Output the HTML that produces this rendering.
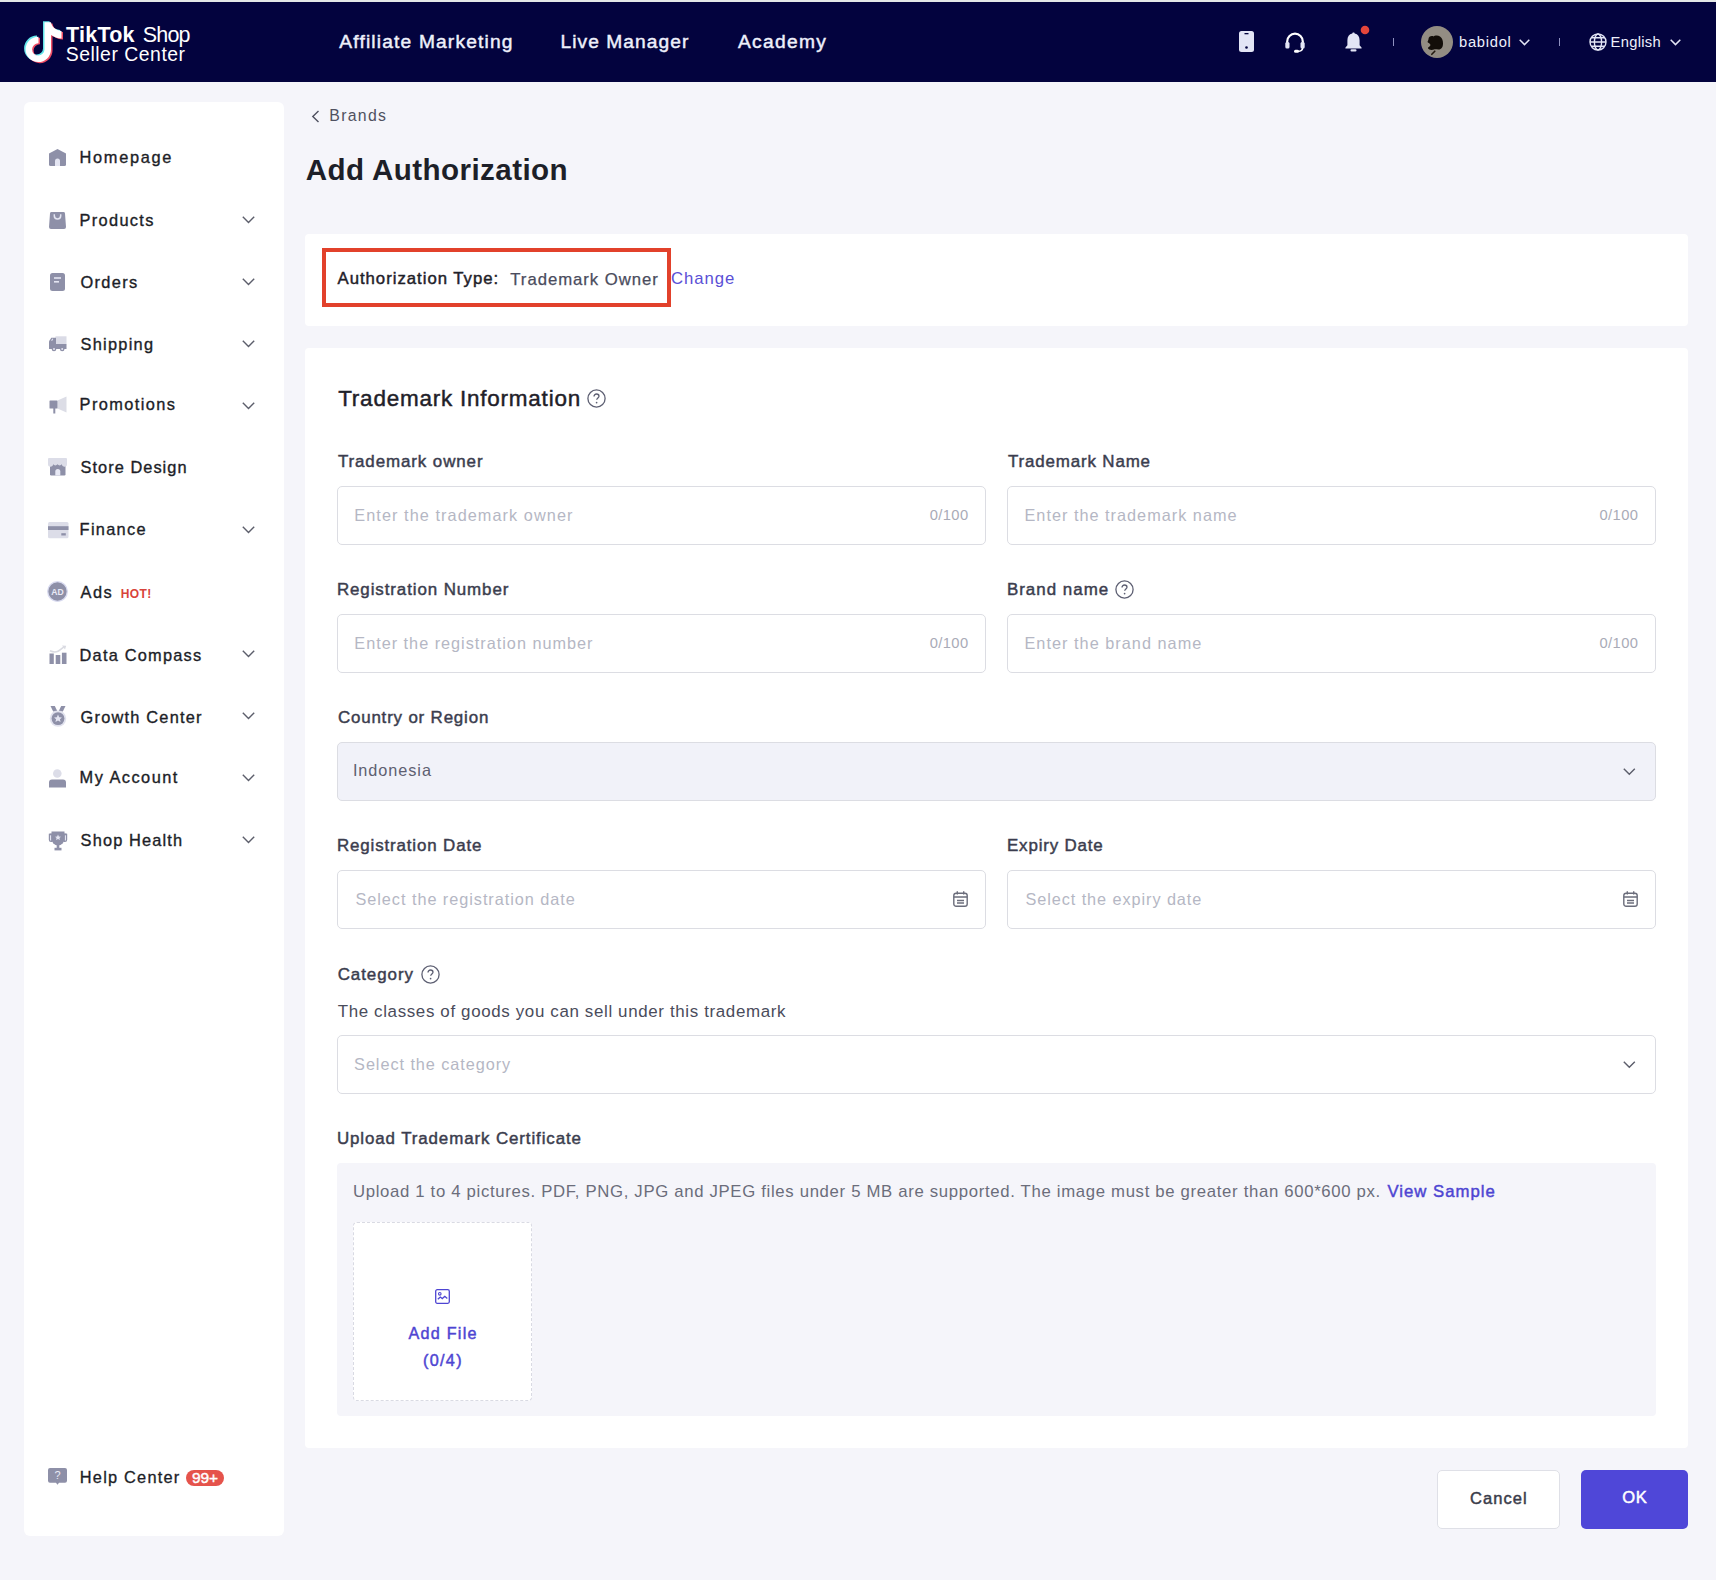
<!DOCTYPE html>
<html><head><meta charset="utf-8">
<style>
html,body{margin:0;padding:0;}
body{width:1716px;height:1580px;overflow:hidden;position:relative;background:#f5f5fa;font-family:"Liberation Sans",sans-serif;}
.t{position:absolute;white-space:nowrap;line-height:1;}
.abs{position:absolute;}
#topline{left:0;top:0;width:1716px;height:2px;background:#e3e7e6;}
#nav{left:0;top:2px;width:1716px;height:80px;background:#03033e;}
#side{left:24px;top:102px;width:260px;height:1434px;background:#fff;border-radius:6px;}
.card{background:#fff;border-radius:4px;}
.inp{position:absolute;box-sizing:border-box;border:1px solid #dcdde3;border-radius:5px;background:#fff;}
.sel{background:#f1f2f9;}
svg{position:absolute;overflow:visible;}
</style></head><body>
<div id="topline" class="abs"></div>
<div id="nav" class="abs"></div>

<!-- logo -->
<svg style="left:0;top:0" width="80" height="80" viewBox="0 0 80 80">
  <path d="M44.5 22.3 H51 C51.5 26.5 55.5 30.5 61.5 31 V38.5 C57.5 38.3 54 37 51 35 V49.5 A12.7 12.7 0 1 1 38.5 36.7 V43.2 A6.2 6.2 0 1 0 44.5 49.5 Z" fill="#64e6ea" transform="translate(-1.5,-1.1)"/>
  <path d="M44.5 22.3 H51 C51.5 26.5 55.5 30.5 61.5 31 V38.5 C57.5 38.3 54 37 51 35 V49.5 A12.7 12.7 0 1 1 38.5 36.7 V43.2 A6.2 6.2 0 1 0 44.5 49.5 Z" fill="#ef4d65" transform="translate(1.5,1.1)"/>
  <path d="M44.5 22.3 H51 C51.5 26.5 55.5 30.5 61.5 31 V38.5 C57.5 38.3 54 37 51 35 V49.5 A12.7 12.7 0 1 1 38.5 36.7 V43.2 A6.2 6.2 0 1 0 44.5 49.5 Z" fill="#ffffff"/>
</svg>

<!-- nav right icons -->
<svg style="left:1239px;top:31px" width="15" height="21" viewBox="0 0 15 21">
  <rect x="0" y="0" width="15" height="21" rx="2.5" fill="#e3e5f5"/>
  <rect x="5.5" y="2" width="4" height="1.3" fill="#03033e"/>
  <circle cx="7.5" cy="16.5" r="1.3" fill="#03033e"/>
</svg>
<svg style="left:1285px;top:32px" width="20" height="21" viewBox="0 0 20 21">
  <path d="M2.2 12 v-2.5 a7.8 7.8 0 0 1 15.6 0 v2.5" fill="none" stroke="#fff" stroke-width="2.2"/>
  <rect x="0.3" y="10" width="4.2" height="6.5" rx="1.5" fill="#e3e5f5"/>
  <rect x="15.5" y="10" width="4.2" height="6.5" rx="1.5" fill="#e3e5f5"/>
  <path d="M17.6 16 c0 2.2-2 3.3-5 3.4" fill="none" stroke="#fff" stroke-width="1.6"/>
  <rect x="9" y="17.8" width="5" height="3" rx="1.5" fill="#fff"/>
</svg>
<svg style="left:1345px;top:32px" width="17" height="20" viewBox="0 0 17 20">
  <path d="M8.5 0.5 c0.8 0 1.2 0.5 1.2 1.1 c3.2 0.7 4.9 3.3 4.9 6.6 v5 l1.9 2.2 c0.4 0.6 0.1 1.1-0.6 1.1 h-14.8 c-0.7 0-1-0.5-0.6-1.1 l1.9-2.2 v-5 c0-3.3 1.7-5.9 4.9-6.6 c0-0.6 0.4-1.1 1.2-1.1 z" fill="#e3e5f5"/>
  <rect x="5.5" y="17.2" width="6" height="2.3" rx="1.1" fill="#e3e5f5"/>
</svg>
<svg style="left:1360px;top:25px" width="10" height="10" viewBox="0 0 10 10"><circle cx="5" cy="5" r="4.3" fill="#e5463b"/></svg>
<div class="abs" style="left:1393px;top:38px;width:1px;height:8px;background:#8f91c0"></div>
<div class="abs" style="left:1421px;top:26px;width:32px;height:32px;border-radius:50%;background:#938d83;overflow:hidden">
  <svg style="left:0;top:0" width="32" height="32" viewBox="0 0 32 32">
    <path d="M7.5 13 C7.5 10.5 10.5 9.5 12.5 10.5 C13.5 9.5 17 9 19 10.5 C21.5 12 22 15 22 17.5 C22 21 20.5 23.5 17.5 23.5 C15.5 23.5 14 23 13 23.5 C11 24.5 7.5 24 6.8 22 C7.5 21 9 20.5 9.5 19 C9 17.5 7.5 17 6.5 16 C6.8 15 7.5 14 7.5 13 Z" fill="#130e09"/>
    <path d="M10.8 28.3 L13.8 25.2" stroke="#231a10" stroke-width="1.6" stroke-linecap="round"/>
  </svg>
</div>
<svg style="left:1519px;top:39px" width="11" height="7" viewBox="0 0 11 7"><path d="M0.7 0.7 L5.5 5.6 L10.3 0.7" fill="none" stroke="#e3e5f5" stroke-width="1.5"/></svg>
<div class="abs" style="left:1559px;top:38px;width:1px;height:8px;background:#8f91c0"></div>
<svg style="left:1589px;top:33px" width="18" height="18" viewBox="0 0 18 18">
  <g fill="none" stroke="#e3e5f5" stroke-width="1.4">
    <circle cx="9" cy="9" r="8"/>
    <ellipse cx="9" cy="9" rx="3.6" ry="8"/>
    <path d="M1 9 H17 M2.2 4.8 H15.8 M2.2 13.2 H15.8"/>
  </g>
</svg>
<svg style="left:1670px;top:39px" width="11" height="7" viewBox="0 0 11 7"><path d="M0.7 0.7 L5.5 5.6 L10.3 0.7" fill="none" stroke="#e3e5f5" stroke-width="1.5"/></svg>

<!-- sidebar -->
<div id="side" class="abs"></div>
<!-- home -->
<svg style="left:49px;top:149px" width="17" height="17" viewBox="0 0 17 17">
  <path d="M8.5 0 L17 4.6 V15.5 a1.5 1.5 0 0 1-1.5 1.5 H1.5 A1.5 1.5 0 0 1 0 15.5 V4.6 Z" fill="#8e90a8"/>
  <path d="M6 17 V12 a2.5 2.5 0 0 1 5 0 V17 Z" fill="#e4e5f2"/>
</svg>
<!-- products -->
<svg style="left:49px;top:212px" width="17" height="17" viewBox="0 0 17 17">
  <path d="M2.5 0 H14.5 a1.5 1.5 0 0 1 1.5 1.4 L17 15 a2 2 0 0 1-2 2 H2 a2 2 0 0 1-2-2 L1 1.4 A1.5 1.5 0 0 1 2.5 0 Z" fill="#8e90a8"/>
  <path d="M5.3 2.2 V3.8 a3.2 3.2 0 0 0 6.4 0 V2.2" fill="none" stroke="#e4e5f2" stroke-width="1.5"/>
</svg>
<!-- orders -->
<svg style="left:50px;top:273px" width="15" height="18" viewBox="0 0 15 18">
  <rect x="0" y="0" width="15" height="18" rx="2.5" fill="#8e90a8"/>
  <rect x="4" y="4.2" width="7" height="1.6" fill="#e4e5f2"/>
  <rect x="4" y="8" width="5" height="1.6" fill="#e4e5f2"/>
</svg>
<!-- shipping -->
<svg style="left:48.5px;top:335.5px" width="18" height="16" viewBox="0 0 18 16">
  <rect x="6.5" y="0.3" width="11" height="8" fill="#dadbe6"/>
  <path d="M2.3 1.8 H7 V13 H0 V5.3 Z" fill="#8e90a8"/>
  <rect x="6" y="8" width="11.5" height="5" fill="#8e90a8"/>
  <path d="M2.6 4.8 L3.8 2.8" stroke="#e4e5f2" stroke-width="1.1"/>
  <circle cx="5" cy="13" r="2.3" fill="#8e90a8"/><circle cx="5" cy="13" r="1" fill="#e4e5f2"/>
  <circle cx="13.2" cy="13" r="2.3" fill="#8e90a8"/><circle cx="13.2" cy="13" r="1" fill="#e4e5f2"/>
</svg>
<!-- promotions -->
<svg style="left:48.5px;top:395.5px" width="18" height="18" viewBox="0 0 18 18">
  <path d="M8.5 4.5 L17.5 0.5 V16.5 L8.5 12.5 Z" fill="#dcdde6"/>
  <rect x="0.5" y="4.5" width="8" height="8" rx="0.6" fill="#8e90a8"/>
  <rect x="4.3" y="12" width="2" height="5.5" fill="#8e90a8"/>
</svg>
<!-- store design -->
<svg style="left:48px;top:458px" width="19" height="18" viewBox="0 0 19 18">
  <rect x="2" y="6" width="15.5" height="11.5" rx="1.2" fill="#8e90a8"/>
  <path d="M1 0 H18 a1 1 0 0 1 1 1 V6 a2.6 2.6 0 0 1-5.2 0.3 a2.6 2.6 0 0 1-4.3 0 a2.6 2.6 0 0 1-4.3 0 A2.6 2.6 0 0 1 0 6 V1 A1 1 0 0 1 1 0 Z" fill="#dcdde8"/>
  <path d="M7.3 17.5 V13.5 a2.5 2.5 0 0 1 5 0 V17.5 Z" fill="#e8e9f5"/>
</svg>
<!-- finance -->
<svg style="left:47.5px;top:521.8px" width="20.5" height="16.5" viewBox="0 0 20.5 16.5">
  <rect x="0" y="0" width="20.5" height="16.3" rx="1.5" fill="#dcdde8"/>
  <rect x="0" y="4.2" width="20.5" height="3.8" fill="#8e90a8"/>
  <rect x="13.3" y="11.2" width="4.5" height="2.3" fill="#8e90a8"/>
</svg>
<!-- ads -->
<svg style="left:47px;top:581px" width="21" height="21" viewBox="0 0 21 21">
  <circle cx="10.5" cy="10.5" r="9.8" fill="#8e90a8" stroke="#d9dbf0" stroke-width="1.3"/>
  <text x="10.5" y="13.6" text-anchor="middle" font-family="Liberation Sans" font-weight="700" font-size="8.6" fill="#e9eaf6">AD</text>
</svg>
<!-- data compass -->
<svg style="left:48.5px;top:645px" width="18" height="19" viewBox="0 0 18 19">
  <path d="M1 5.8 C4 7.2 6.5 7.5 9 6.3 C11 5.3 13 3 15.5 1.6" fill="none" stroke="#dadbe2" stroke-width="1.6"/>
  <path d="M13 0.6 L17.2 0.8 L16 4.5 Z" fill="#dadbe2"/>
  <rect x="0.5" y="8.5" width="4.3" height="10.5" fill="#8e90a8"/>
  <rect x="6.7" y="10" width="4.6" height="9" fill="#8e90a8"/>
  <rect x="12.9" y="7.7" width="4.6" height="11.3" fill="#8e90a8"/>
</svg>
<!-- growth center -->
<svg style="left:48.5px;top:705px" width="18" height="23" viewBox="0 0 18 23">
  <path d="M1.5 1 H5.8 L8.5 6.5 H4.2 Z" fill="#8e90a8"/>
  <path d="M16.5 1 H12.2 L9.5 6.5 H13.8 Z" fill="#8e90a8"/>
  <circle cx="9" cy="13.6" r="8.2" fill="#e1e2ee"/>
  <circle cx="9" cy="13.6" r="6.4" fill="#8e90a8"/>
  <path d="M9 9.6 L10.2 12.3 L13 12.5 L10.9 14.3 L11.6 17.1 L9 15.6 L6.4 17.1 L7.1 14.3 L5 12.5 L7.8 12.3 Z" fill="#e4e5f2"/>
</svg>
<!-- my account -->
<svg style="left:49px;top:768.5px" width="17" height="19" viewBox="0 0 17 19">
  <circle cx="8.3" cy="4.5" r="4.3" fill="#dcdde8"/>
  <path d="M3 10.5 H14 a3 3 0 0 1 3 3 V18.5 H0 V13.5 A3 3 0 0 1 3 10.5 Z" fill="#8e90a8"/>
</svg>
<!-- shop health -->
<svg style="left:47.5px;top:830.5px" width="20" height="20" viewBox="0 0 20 20">
  <path d="M1.5 3 H4 M16 3 H18.5" stroke="#8e90a8" stroke-width="1"/>
  <path d="M0.8 2.8 H4.5 V11 H3 a2.2 2.2 0 0 1-2.2-2.2 Z" fill="#8e90a8"/>
  <path d="M19.2 2.8 H15.5 V11 H17 a2.2 2.2 0 0 0 2.2-2.2 Z" fill="#8e90a8"/>
  <rect x="2" y="4.3" width="1.2" height="5.2" fill="#e4e5f2"/>
  <rect x="16.8" y="4.3" width="1.2" height="5.2" fill="#e4e5f2"/>
  <path d="M3.5 0.5 H16.5 V8 a6.5 6.5 0 0 1-13 0 Z" fill="#8e90a8"/>
  <rect x="8.7" y="13.5" width="2.6" height="4" fill="#8e90a8"/>
  <rect x="6.5" y="16.8" width="7" height="2.6" fill="#8e90a8"/>
  <path d="M10 3.5 L10.9 5.6 L13 5.7 L11.4 7 L12 9.1 L10 7.9 L8 9.1 L8.6 7 L7 5.7 L9.1 5.6 Z" fill="#e4e5f2"/>
</svg>
<!-- help -->
<svg style="left:48px;top:1468px" width="19" height="17" viewBox="0 0 19 17">
  <path d="M2 0 H17 a2 2 0 0 1 2 2 V12.7 a2 2 0 0 1-2 2 H11 L9.5 16.7 L8 14.7 H2 a2 2 0 0 1-2-2 V2 A2 2 0 0 1 2 0 Z" fill="#8e90a8"/>
  <text x="9.5" y="11.4" text-anchor="middle" font-family="Liberation Sans" font-size="11" fill="#e9eaf6">?</text>
</svg>
<svg style="left:241.5px;top:216.4px" width="13" height="8" viewBox="0 0 13 8"><path d="M0.8 0.8 L6.5 6.5 L12.2 0.8" fill="none" stroke="#5c5e6b" stroke-width="1.4"/></svg>
<svg style="left:241.5px;top:278.3px" width="13" height="8" viewBox="0 0 13 8"><path d="M0.8 0.8 L6.5 6.5 L12.2 0.8" fill="none" stroke="#5c5e6b" stroke-width="1.4"/></svg>
<svg style="left:241.5px;top:340.3px" width="13" height="8" viewBox="0 0 13 8"><path d="M0.8 0.8 L6.5 6.5 L12.2 0.8" fill="none" stroke="#5c5e6b" stroke-width="1.4"/></svg>
<svg style="left:241.5px;top:402.2px" width="13" height="8" viewBox="0 0 13 8"><path d="M0.8 0.8 L6.5 6.5 L12.2 0.8" fill="none" stroke="#5c5e6b" stroke-width="1.4"/></svg>
<svg style="left:241.5px;top:526.1px" width="13" height="8" viewBox="0 0 13 8"><path d="M0.8 0.8 L6.5 6.5 L12.2 0.8" fill="none" stroke="#5c5e6b" stroke-width="1.4"/></svg>
<svg style="left:241.5px;top:650.0px" width="13" height="8" viewBox="0 0 13 8"><path d="M0.8 0.8 L6.5 6.5 L12.2 0.8" fill="none" stroke="#5c5e6b" stroke-width="1.4"/></svg>
<svg style="left:241.5px;top:712.0px" width="13" height="8" viewBox="0 0 13 8"><path d="M0.8 0.8 L6.5 6.5 L12.2 0.8" fill="none" stroke="#5c5e6b" stroke-width="1.4"/></svg>
<svg style="left:241.5px;top:773.9px" width="13" height="8" viewBox="0 0 13 8"><path d="M0.8 0.8 L6.5 6.5 L12.2 0.8" fill="none" stroke="#5c5e6b" stroke-width="1.4"/></svg>
<svg style="left:241.5px;top:835.9px" width="13" height="8" viewBox="0 0 13 8"><path d="M0.8 0.8 L6.5 6.5 L12.2 0.8" fill="none" stroke="#5c5e6b" stroke-width="1.4"/></svg>


<!-- breadcrumb chevron -->
<svg style="left:311px;top:110px" width="9" height="13" viewBox="0 0 9 13"><path d="M7.5 1 L1.8 6.5 L7.5 12" fill="none" stroke="#4f5160" stroke-width="1.4"/></svg>

<!-- card 1 -->
<div class="abs card" style="left:305px;top:234px;width:1383px;height:92px"></div>
<div class="abs" style="left:322px;top:248px;width:349px;height:58.5px;box-sizing:border-box;border:4px solid #e2412b"></div>

<!-- card 2 -->
<div class="abs card" style="left:305px;top:348px;width:1383px;height:1100px"></div>
<svg style="left:587px;top:389px" width="19" height="19" viewBox="0 0 19 19"><circle cx="9.5" cy="9.5" r="8.6" fill="none" stroke="#5d5f72" stroke-width="1.3"/><path d="M7 7.4 c0-1.5 1.1-2.4 2.5-2.4 c1.4 0 2.5 0.9 2.5 2.2 c0 1.6-2.3 1.9-2.3 3.6" fill="none" stroke="#5d5f72" stroke-width="1.3"/><circle cx="9.6" cy="13.6" r="0.85" fill="#5d5f72"/></svg>

<div class="inp" style="left:337px;top:486px;width:649px;height:59px"></div>
<div class="inp" style="left:1007px;top:486px;width:649px;height:59px"></div>
<div class="inp" style="left:337px;top:614px;width:649px;height:59px"></div>
<div class="inp" style="left:1007px;top:614px;width:649px;height:59px"></div>
<svg style="left:1115px;top:580px" width="19" height="19" viewBox="0 0 19 19"><circle cx="9.5" cy="9.5" r="8.6" fill="none" stroke="#5d5f72" stroke-width="1.3"/><path d="M7 7.4 c0-1.5 1.1-2.4 2.5-2.4 c1.4 0 2.5 0.9 2.5 2.2 c0 1.6-2.3 1.9-2.3 3.6" fill="none" stroke="#5d5f72" stroke-width="1.3"/><circle cx="9.6" cy="13.6" r="0.85" fill="#5d5f72"/></svg>

<div class="inp sel" style="left:337px;top:742px;width:1319px;height:59px"></div>
<svg style="left:1623px;top:768px" width="13" height="8" viewBox="0 0 13 8"><path d="M0.8 0.8 L6.3 6.3 L11.8 0.8" fill="none" stroke="#5c5e6b" stroke-width="1.4"/></svg>

<div class="inp" style="left:337px;top:870px;width:649px;height:59px"></div>
<div class="inp" style="left:1007px;top:870px;width:649px;height:59px"></div>
<svg style="left:953px;top:891px" width="15" height="16" viewBox="0 0 15 16"><g fill="none" stroke="#6b6d7b" stroke-width="1.4"><rect x="0.8" y="2.2" width="13.4" height="13" rx="2.3"/><path d="M0.8 6 H14.2 M4.3 0.3 V3.5 M10.7 0.3 V3.5 M4 9.5 H11 M4 12 H11"/></g></svg>
<svg style="left:1623px;top:891px" width="15" height="16" viewBox="0 0 15 16"><g fill="none" stroke="#6b6d7b" stroke-width="1.4"><rect x="0.8" y="2.2" width="13.4" height="13" rx="2.3"/><path d="M0.8 6 H14.2 M4.3 0.3 V3.5 M10.7 0.3 V3.5 M4 9.5 H11 M4 12 H11"/></g></svg>

<svg style="left:421px;top:965px" width="19" height="19" viewBox="0 0 19 19"><circle cx="9.5" cy="9.5" r="8.6" fill="none" stroke="#5d5f72" stroke-width="1.3"/><path d="M7 7.4 c0-1.5 1.1-2.4 2.5-2.4 c1.4 0 2.5 0.9 2.5 2.2 c0 1.6-2.3 1.9-2.3 3.6" fill="none" stroke="#5d5f72" stroke-width="1.3"/><circle cx="9.6" cy="13.6" r="0.85" fill="#5d5f72"/></svg>
<div class="inp" style="left:337px;top:1035px;width:1319px;height:59px"></div>
<svg style="left:1623px;top:1061px" width="13" height="8" viewBox="0 0 13 8"><path d="M0.8 0.8 L6.3 6.3 L11.8 0.8" fill="none" stroke="#5c5e6b" stroke-width="1.4"/></svg>

<div class="abs" style="left:337px;top:1163px;width:1319px;height:253px;background:#f5f5fa;border-radius:4px"></div>
<div class="abs" style="left:353px;top:1222px;width:179px;height:179px;box-sizing:border-box;border:1px dashed #d9dae3;background:#fff;border-radius:4px"></div>
<svg style="left:435px;top:1289px" width="15" height="15" viewBox="0 0 15 15"><g fill="none" stroke="#4e45d2" stroke-width="1.3"><rect x="0.7" y="0.7" width="13.6" height="13.6" rx="1.5"/><path d="M2.8 10.3 L5.3 8 L7.3 9.6 L9.8 7.3 L12.3 9.6"/></g><circle cx="4.8" cy="4.8" r="1.3" fill="none" stroke="#4e45d2" stroke-width="1.1"/></svg>

<!-- buttons -->
<div class="abs" style="left:1437px;top:1470px;width:123px;height:59px;box-sizing:border-box;border:1px solid #dfe0e7;background:#fff;border-radius:5px"></div>
<div class="abs" style="left:1581px;top:1470px;width:107px;height:59px;background:#4f47d8;border-radius:5px"></div>

<!-- badge -->
<div class="abs" style="left:186px;top:1470px;width:38px;height:16px;border-radius:8px;background:#e5534b"></div>

<div class=t style="left:66.10px;top:24.60px;font-size:21.5px;font-weight:700;color:#ffffff;letter-spacing:0.231px">TikTok</div>
<div class=t style="left:142.80px;top:24.60px;font-size:21.5px;font-weight:400;color:#ffffff;letter-spacing:-0.852px">Shop</div>
<div class=t style="left:65.70px;top:44.68px;font-size:19.4px;font-weight:400;color:#ffffff;letter-spacing:0.516px">Seller Center</div>
<div class=t style="left:339.30px;top:32.35px;font-size:19.2px;font-weight:400;color:#eef0fb;-webkit-text-stroke:0.45px #eef0fb;letter-spacing:1.168px">Affiliate Marketing</div>
<div class=t style="left:560.50px;top:32.35px;font-size:19.2px;font-weight:400;color:#eef0fb;-webkit-text-stroke:0.45px #eef0fb;letter-spacing:1.048px">Live Manager</div>
<div class=t style="left:737.90px;top:32.35px;font-size:19.2px;font-weight:400;color:#eef0fb;-webkit-text-stroke:0.45px #eef0fb;letter-spacing:1.335px">Academy</div>
<div class=t style="left:1459.00px;top:34.54px;font-size:14.72px;font-weight:400;color:#eef0fb;letter-spacing:0.733px">babidol</div>
<div class=t style="left:1610.50px;top:34.54px;font-size:14.72px;font-weight:400;color:#eef0fb;letter-spacing:0.319px">English</div>
<div class=t style="left:79.60px;top:149.24px;font-size:16.38px;font-weight:400;color:#1c1e27;-webkit-text-stroke:0.35px #1c1e27;letter-spacing:1.667px">Homepage</div>
<div class=t style="left:79.60px;top:212.04px;font-size:16.38px;font-weight:400;color:#1c1e27;-webkit-text-stroke:0.35px #1c1e27;letter-spacing:1.317px">Products</div>
<div class=t style="left:80.60px;top:273.84px;font-size:16.38px;font-weight:400;color:#1c1e27;-webkit-text-stroke:0.35px #1c1e27;letter-spacing:1.297px">Orders</div>
<div class=t style="left:80.60px;top:335.64px;font-size:16.38px;font-weight:400;color:#1c1e27;-webkit-text-stroke:0.35px #1c1e27;letter-spacing:1.247px">Shipping</div>
<div class=t style="left:79.60px;top:395.84px;font-size:16.38px;font-weight:400;color:#1c1e27;-webkit-text-stroke:0.35px #1c1e27;letter-spacing:1.393px">Promotions</div>
<div class=t style="left:80.60px;top:459.34px;font-size:16.38px;font-weight:400;color:#1c1e27;-webkit-text-stroke:0.35px #1c1e27;letter-spacing:1.030px">Store Design</div>
<div class=t style="left:79.60px;top:521.24px;font-size:16.38px;font-weight:400;color:#1c1e27;-webkit-text-stroke:0.35px #1c1e27;letter-spacing:1.300px">Finance</div>
<div class=t style="left:80.60px;top:583.74px;font-size:16.38px;font-weight:400;color:#1c1e27;-webkit-text-stroke:0.35px #1c1e27;letter-spacing:1.495px">Ads</div>
<div class=t style="left:79.60px;top:646.94px;font-size:16.38px;font-weight:400;color:#1c1e27;-webkit-text-stroke:0.35px #1c1e27;letter-spacing:1.207px">Data Compass</div>
<div class=t style="left:80.60px;top:708.94px;font-size:16.38px;font-weight:400;color:#1c1e27;-webkit-text-stroke:0.35px #1c1e27;letter-spacing:1.206px">Growth Center</div>
<div class=t style="left:79.60px;top:768.94px;font-size:16.38px;font-weight:400;color:#1c1e27;-webkit-text-stroke:0.35px #1c1e27;letter-spacing:1.465px">My Account</div>
<div class=t style="left:80.60px;top:831.64px;font-size:16.38px;font-weight:400;color:#1c1e27;-webkit-text-stroke:0.35px #1c1e27;letter-spacing:1.146px">Shop Health</div>
<div class=t style="left:120.80px;top:587.54px;font-size:12.0px;font-weight:700;color:#d8433b;letter-spacing:0.357px">HOT!</div>
<div class=t style="left:79.80px;top:1469.14px;font-size:16.38px;font-weight:400;color:#1c1e27;-webkit-text-stroke:0.3px #1c1e27;letter-spacing:1.216px">Help Center</div>
<div class=t style="left:192.10px;top:1469.88px;font-size:15.5px;font-weight:400;color:#ffffff;-webkit-text-stroke:0.45px #ffffff;letter-spacing:-0.170px">99+</div>
<div class=t style="left:329.30px;top:108.31px;font-size:15.82px;font-weight:400;color:#4f5160;letter-spacing:1.301px">Brands</div>
<div class=t style="left:305.70px;top:155.16px;font-size:29.59px;font-weight:700;color:#1d1f28;letter-spacing:0.423px">Add Authorization</div>
<div class=t style="left:337.50px;top:271.03px;font-size:16.74px;font-weight:400;color:#1f2129;-webkit-text-stroke:0.45px #1f2129;letter-spacing:0.983px">Authorization Type:</div>
<div class=t style="left:510.30px;top:272.03px;font-size:16.74px;font-weight:400;color:#4a4c5d;-webkit-text-stroke:0.25px #4a4c5d;letter-spacing:0.954px">Trademark Owner</div>
<div class=t style="left:670.90px;top:271.03px;font-size:16.74px;font-weight:400;color:#5a4fd6;letter-spacing:0.977px">Change</div>
<div class=t style="left:338.20px;top:388.19px;font-size:22.46px;font-weight:400;color:#1f2129;-webkit-text-stroke:0.45px #1f2129;letter-spacing:0.786px">Trademark Information</div>
<div class=t style="left:337.90px;top:454.07px;font-size:16.93px;font-weight:400;color:#3b3d4e;-webkit-text-stroke:0.45px #3b3d4e;letter-spacing:0.905px">Trademark owner</div>
<div class=t style="left:1007.90px;top:453.97px;font-size:16.93px;font-weight:400;color:#3b3d4e;-webkit-text-stroke:0.45px #3b3d4e;letter-spacing:0.853px">Trademark Name</div>
<div class=t style="left:336.90px;top:581.97px;font-size:16.93px;font-weight:400;color:#3b3d4e;-webkit-text-stroke:0.45px #3b3d4e;letter-spacing:0.903px">Registration Number</div>
<div class=t style="left:1006.90px;top:581.57px;font-size:16.93px;font-weight:400;color:#3b3d4e;-webkit-text-stroke:0.45px #3b3d4e;letter-spacing:1.014px">Brand name</div>
<div class=t style="left:337.90px;top:709.97px;font-size:16.93px;font-weight:400;color:#3b3d4e;-webkit-text-stroke:0.45px #3b3d4e;letter-spacing:0.818px">Country or Region</div>
<div class=t style="left:336.90px;top:837.67px;font-size:16.93px;font-weight:400;color:#3b3d4e;-webkit-text-stroke:0.45px #3b3d4e;letter-spacing:0.861px">Registration Date</div>
<div class=t style="left:1007.00px;top:837.57px;font-size:16.93px;font-weight:400;color:#3b3d4e;-webkit-text-stroke:0.45px #3b3d4e;letter-spacing:0.825px">Expiry Date</div>
<div class=t style="left:337.70px;top:966.87px;font-size:16.93px;font-weight:400;color:#3b3d4e;-webkit-text-stroke:0.45px #3b3d4e;letter-spacing:0.943px">Category</div>
<div class=t style="left:336.90px;top:1131.07px;font-size:16.93px;font-weight:400;color:#3b3d4e;-webkit-text-stroke:0.45px #3b3d4e;letter-spacing:0.890px">Upload Trademark Certificate</div>
<div class=t style="left:354.30px;top:507.22px;font-size:16.28px;font-weight:400;color:#b5b7c4;letter-spacing:1.065px">Enter the trademark owner</div>
<div class=t style="left:1024.50px;top:507.22px;font-size:16.28px;font-weight:400;color:#b5b7c4;letter-spacing:1.004px">Enter the trademark name</div>
<div class=t style="left:354.30px;top:635.22px;font-size:16.28px;font-weight:400;color:#b5b7c4;letter-spacing:0.984px">Enter the registration number</div>
<div class=t style="left:1024.50px;top:635.22px;font-size:16.28px;font-weight:400;color:#b5b7c4;letter-spacing:1.022px">Enter the brand name</div>
<div class=t style="left:352.90px;top:762.22px;font-size:16.28px;font-weight:400;color:#5e6071;letter-spacing:0.938px">Indonesia</div>
<div class=t style="left:355.50px;top:891.22px;font-size:16.28px;font-weight:400;color:#b5b7c4;letter-spacing:0.954px">Select the registration date</div>
<div class=t style="left:1025.40px;top:891.22px;font-size:16.28px;font-weight:400;color:#b5b7c4;letter-spacing:0.930px">Select the expiry date</div>
<div class=t style="left:354.10px;top:1056.22px;font-size:16.28px;font-weight:400;color:#b5b7c4;letter-spacing:0.938px">Select the category</div>
<div class=t style="left:929.70px;top:507.54px;font-size:14.72px;font-weight:400;color:#a9abb7;letter-spacing:0.388px">0/100</div>
<div class=t style="left:1599.50px;top:507.54px;font-size:14.72px;font-weight:400;color:#a9abb7;letter-spacing:0.388px">0/100</div>
<div class=t style="left:929.70px;top:635.54px;font-size:14.72px;font-weight:400;color:#a9abb7;letter-spacing:0.388px">0/100</div>
<div class=t style="left:1599.50px;top:635.54px;font-size:14.72px;font-weight:400;color:#a9abb7;letter-spacing:0.388px">0/100</div>
<div class=t style="left:337.70px;top:1004.27px;font-size:16.93px;font-weight:400;color:#4a4c5b;letter-spacing:0.640px">The classes of goods you can sell under this trademark</div>
<div class=t style="left:352.90px;top:1183.93px;font-size:16.74px;font-weight:400;color:#6b6d7b;letter-spacing:0.673px">Upload 1 to 4 pictures. PDF, PNG, JPG and JPEG files under 5 MB are supported. The image must be greater than 600*600 px.</div>
<div class=t style="left:1387.40px;top:1183.93px;font-size:16.74px;font-weight:400;color:#4e45d2;-webkit-text-stroke:0.45px #4e45d2;letter-spacing:1.015px">View Sample</div>
<div class=t style="left:408.60px;top:1325.30px;font-size:16.19px;font-weight:400;color:#4e45d2;-webkit-text-stroke:0.45px #4e45d2;letter-spacing:1.217px">Add File</div>
<div class=t style="left:423.00px;top:1352.20px;font-size:16.19px;font-weight:400;color:#4e45d2;-webkit-text-stroke:0.45px #4e45d2;letter-spacing:1.327px">(0/4)</div>
<div class=t style="left:1470.00px;top:1491.18px;font-size:16.56px;font-weight:400;color:#3a3c4a;-webkit-text-stroke:0.45px #3a3c4a;letter-spacing:1.054px">Cancel</div>
<div class=t style="left:1622.20px;top:1490.18px;font-size:16.56px;font-weight:400;color:#ffffff;-webkit-text-stroke:0.45px #ffffff;letter-spacing:0.729px">OK</div>
</body></html>
